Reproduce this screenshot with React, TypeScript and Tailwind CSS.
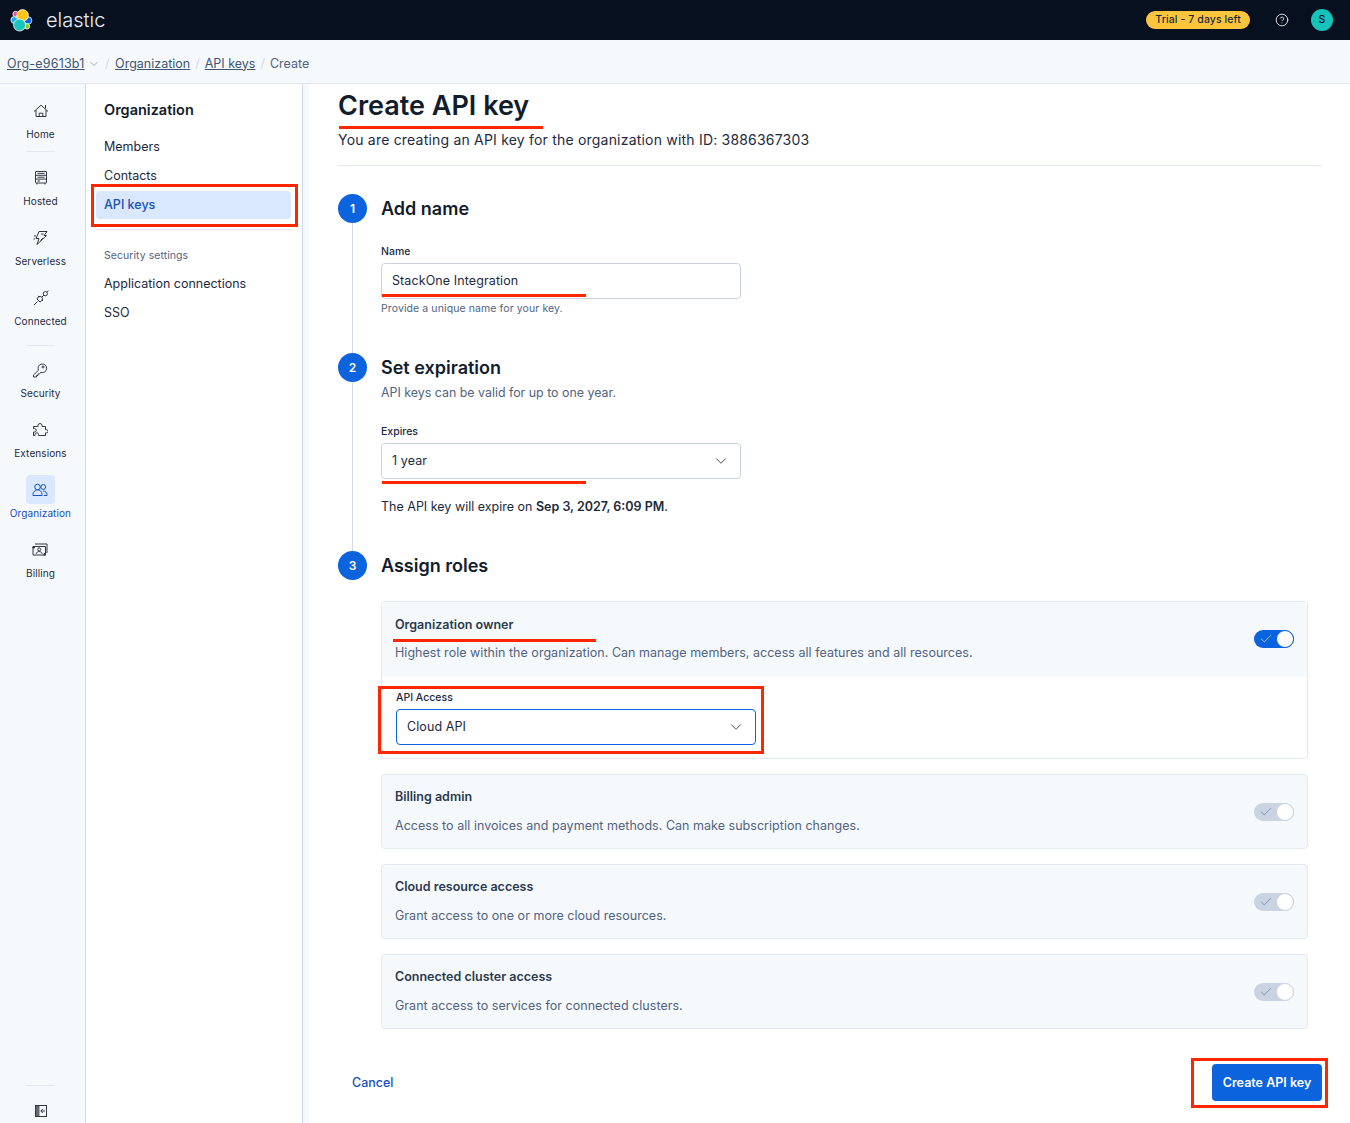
import React from "react";
import { Check, ChevronDown, CircleHelp } from "lucide-react";

type RailItem = { label: string; icon: React.ReactNode; active?: boolean };

const Glyph = ({ children }: { children: React.ReactNode }) => (
  <svg width="16" height="16" viewBox="0 0 16 16" fill="none" stroke="currentColor" strokeWidth="1" strokeLinejoin="round">
    {children}
  </svg>
);

const HomeIcon = (
  <Glyph>
    <path d="M1 8.5 8 2.2l7 6.3" />
    <path d="M3 7v6.5h10V7" />
    <path d="M6.2 13.5V10.2h3.6v3.3" />
    <path d="M12.5 2v3.5" />
  </Glyph>
);
const HostedIcon = (
  <Glyph>
    <rect x="2.5" y="1.5" width="11" height="11.5" rx="0.5" />
    <path d="M2.5 5.3h11M2.5 9.1h11M4.5 3.4h7M4.5 7.2h7M4.5 11h2.5M4 13v1.5M12 13v1.5" />
  </Glyph>
);
const BoltIcon = (
  <Glyph>
    <path d="M6 1.5h8l-3 4h2.5L4 14.5l2-6H3z" />
    <path d="M8 4h2.5M7.5 10.5l2.5-2.5M1 6h2M.5 9h1.5" />
  </Glyph>
);
const PlugIcon = (
  <Glyph>
    <path d="M1 15l3.5-3.5" />
    <path d="M4 9l3 3 1-.6.8-.9a2.4 2.4 0 0 0-3.4-3.4l-.8.8z" />
    <path d="M6.2 7.2 5 5.8M8.8 9.8l1.2 1.2M9 7l2-2" />
    <circle cx="12.3" cy="3.7" r="2.1" />
    <path d="M14 2l1.5-1.2" />
  </Glyph>
);
const KeyIcon = (
  <Glyph>
    <path d="M6.5 8.2 1.5 13v2h3v-1.5H6V12h1.5l1.3-1.7a4.3 4.3 0 1 0-2.3-2.1z" />
    <circle cx="11" cy="5" r="1" />
  </Glyph>
);
const PuzzleIcon = (
  <Glyph>
    <path d="M6 3.5a2 2 0 1 1 4 0V4.5h3.5v3.2h1a1.6 1.6 0 0 1 0 3.2h-1V13.5H6.5v-1a1.7 1.7 0 0 0-3.4 0v1H1.5V10h1a1.7 1.7 0 0 0 0-3.4h-1V4.5H6z" />
  </Glyph>
);
const UsersIcon = (
  <Glyph>
    <circle cx="5.5" cy="5" r="2.8" />
    <circle cx="11.2" cy="5" r="2.4" />
    <path d="M1 13.5v-1.2A4.5 4.5 0 0 1 10 12.3v1.2zM11 9a3.7 3.7 0 0 1 4 3.6v.9h-3.2" />
  </Glyph>
);
const BillingIcon = (
  <Glyph>
    <path d="M3 2h12v9M1 4.5h12.5V13H1z" />
    <circle cx="7.2" cy="7.4" r="1.5" />
    <path d="M4.2 11.8c.3-3 5.7-3 6 0" />
    <path d="M1 4.5h1.5V6H1zM12 11.5h1.5V13H12z" fill="currentColor" />
  </Glyph>
);
const CollapseIcon = (
  <svg width="16" height="16" viewBox="0 0 16 16" fill="none" stroke="currentColor" strokeWidth="1">
    <rect x="2.5" y="2.5" width="11" height="11" />
    <rect x="2" y="2" width="4.5" height="12" fill="currentColor" stroke="none" opacity="0.75" />
    <path d="M12 8H8m1.8-2L7.8 8l2 2" />
  </svg>
);

const ElasticLogo = () => (
  <svg width="23" height="23" viewBox="0 0 23 23" className="shrink-0" stroke="#ffffff" strokeWidth="0.8">
    <circle cx="4.3" cy="11" r="3.4" fill="#1ba9f5" />
    <circle cx="5.6" cy="5" r="2.7" fill="#f04e98" />
    <circle cx="18" cy="11.5" r="3.8" fill="#0b64dd" />
    <circle cx="17" cy="17.3" r="2.7" fill="#93c90e" />
    <circle cx="12.6" cy="6.4" r="5.8" fill="#fec514" />
    <circle cx="9.6" cy="16" r="6" fill="#16c5c0" />
  </svg>
);

const Toggle = ({ on }: { on?: boolean }) => (
  <div
    className={`flex h-[18px] w-[40px] items-center justify-between rounded-full pl-[5px] ${
      on ? "bg-[#0b64dd]" : "bg-[#cad3e2]"
    }`}
  >
    <Check size={14} strokeWidth={1} className={on ? "text-white" : "text-[#516381]"} />
    <span
      className={`h-[18px] w-[18px] rounded-full border bg-white ${
        on ? "border-[#0b64dd]" : "border-[#cad3e2]"
      }`}
    />
  </div>
);

const RailLink = ({ label, icon, active }: RailItem) => (
  <div className="flex h-12 flex-col items-center">
    <div
      className={`flex h-[29px] w-[29px] items-center justify-center rounded-[4px] ${
        active ? "bg-[#d9e8ff] text-[#1750ba]" : "text-[#343741]"
      }`}
    >
      {icon}
    </div>
    <span
      className={`mt-[1px] text-[10px] leading-[16px] tracking-[0.1px] ${
        active ? "text-[#1750ba]" : "text-[#1d2a3e]"
      }`}
    >
      {label}
    </span>
  </div>
);

const Step = ({
  n,
  title,
  line,
  className,
  children,
}: {
  n: number;
  title: string;
  line?: boolean;
  className: string;
  children: React.ReactNode;
}) => (
  <div className={`flex gap-[14px] ${className}`}>
    <div className="flex w-[29px] shrink-0 flex-col items-center">
      <div className="flex h-[29px] w-[29px] shrink-0 items-center justify-center rounded-full bg-[#0b64dd] text-[12px] font-semibold text-white">
        {n}
      </div>
      {line && <div className="w-px flex-1 bg-[#d3dae6]" />}
    </div>
    <div className="min-w-0 flex-1">
      <h2 className="text-[18px] leading-[29px] font-semibold text-[#111c2c]">{title}</h2>
      {children}
    </div>
  </div>
);

const SelectBox = ({ value, focused }: { value: string; focused?: boolean }) => (
  <div
    className={`flex h-9 w-[360px] items-center justify-between rounded-[4px] border bg-white pr-[10px] pl-[10px] text-[12.5px] tracking-[0.1px] text-[#1d2a3e] ${
      focused ? "border-[#0b64dd]" : "border-[#cad3e2]"
    }`}
  >
    {value}
    <ChevronDown size={18} strokeWidth={1.1} className="text-[#1d2a3e]" />
  </div>
);

const RoleCard = ({ title, text }: { title: string; text: string }) => (
  <div className="flex h-[75px] items-center justify-between rounded-[4px] border border-[#e3e8f2] bg-[#f6f9fc] pr-[13px] pl-[13px]">
    <div>
      <div className="text-[12.5px] leading-[18px] font-semibold text-[#2b394f]">{title}</div>
      <div className="mt-[11px] text-[12.5px] leading-[18px] tracking-[0.03px] text-[#516381]">{text}</div>
    </div>
    <Toggle />
  </div>
);

const App = () => {
  return (
    <div className="relative flex h-[1123px] w-full flex-col overflow-hidden bg-white font-['Inter',sans-serif] text-[#1d2a3e]">
      {/* Top bar */}
      <header className="flex h-10 shrink-0 items-center bg-[#07101f] pr-[17px] pl-[10px]">
        <ElasticLogo />
        <span className="ml-[13px] text-[20px] leading-none font-light text-[#e8edf4]">elastic</span>
        <div className="ml-auto flex items-center">
          <span className="rounded-full bg-[#fcc63c] px-[9px] text-[10.5px] leading-[18px] font-medium tracking-[0.1px] text-[#1d2a3e]">
            Trial - 7 days left
          </span>
          <CircleHelp size={14} strokeWidth={1.4} className="ml-[25px] text-white" />
          <span className="ml-[22px] flex h-[22px] w-[22px] items-center justify-center rounded-full bg-[#14c3b9] text-[10.5px] font-medium text-[#07101f]">
            S
          </span>
        </div>
      </header>

      {/* Breadcrumbs */}
      <nav className="flex h-11 shrink-0 items-center border-b border-[#e3e8f2] bg-[#f6f9fc] pt-[5px] pl-[7px] text-[12.5px] text-[#516381]">
        <span className="tracking-[0.2px] text-[#3f5573] underline">Org-e9613b1</span>
        <ChevronDown size={12} strokeWidth={1.1} className="ml-[3px] text-[#516381]" />
        <span className="mx-[5.5px] text-[#d3dae6]">/</span>
        <span className="text-[#3f5573] underline">Organization</span>
        <span className="mx-[5px] text-[#d3dae6]">/</span>
        <span className="text-[#3f5573] underline">API keys</span>
        <span className="mx-[5px] text-[#d3dae6]">/</span>
        <span>Create</span>
      </nav>

      <div className="flex min-h-0 flex-1">
        {/* Icon rail */}
        <aside className="flex w-[86px] shrink-0 flex-col items-center border-r border-[#d3dae6] bg-[#f6f9fc] pt-3 pr-1">
          <RailLink label="Home" icon={HomeIcon} />
          <div className="mt-[7px] mb-[11px] h-px w-[29px] bg-[#e3e8f2]" />
          <div className="flex flex-col items-center gap-3">
            <RailLink label="Hosted" icon={HostedIcon} />
            <RailLink label="Serverless" icon={BoltIcon} />
            <RailLink label="Connected" icon={PlugIcon} />
          </div>
          <div className="mt-[14px] mb-[9px] h-px w-[29px] bg-[#e3e8f2]" />
          <div className="flex flex-col items-center gap-3">
            <RailLink label="Security" icon={KeyIcon} />
            <RailLink label="Extensions" icon={PuzzleIcon} />
            <RailLink label="Organization" icon={UsersIcon} active />
            <RailLink label="Billing" icon={BillingIcon} />
          </div>
          <div className="mt-auto h-px w-[29px] bg-[#e3e8f2]" />
          <div className="mt-[17px] mb-[4px] text-[#343741]">{CollapseIcon}</div>
        </aside>

        {/* Section nav */}
        <aside className="w-[217px] shrink-0 border-r border-[#d3dae6] bg-white pt-[14px] pr-[11px] pl-[10px]">
          <h3 className="pl-2 text-[14.5px] leading-[24px] font-semibold text-[#111c2c]">Organization</h3>
          <div className="mt-[10px] pl-2 text-[12.5px] leading-[29px]">Members</div>
          <div className="pl-2 text-[12.5px] leading-[29px]">Contacts</div>
          <div className="mt-[1px] rounded-[4px] bg-[#d9e8ff] pl-2 text-[12.5px] leading-[28px] font-medium text-[#1750ba]">
            API keys
          </div>
          <div className="mt-[10px] h-px bg-[#e3e8f2]" />
          <div className="mt-[18px] pl-2 text-[10.5px] leading-[16px] tracking-[0.05px] text-[#516381]">Security settings</div>
          <div className="mt-[5px] pl-2 text-[12.5px] leading-[29px]">Application connections</div>
          <div className="pl-2 text-[12.5px] leading-[29px]">SSO</div>
        </aside>
        <div className="w-[6px] shrink-0 bg-[#f6f9fc]" />

        {/* Main */}
        <main className="min-w-0 flex-1 pt-[2px] pr-[28px] pl-[29px]">
          <h1 className="text-[27px] leading-[40px] font-semibold text-[#111c2c]">Create API key</h1>
          <p className="mt-[2px] text-[14px] leading-[24px] tracking-[0.2px]">
            You are creating an API key for the organization with ID: 3886367303
          </p>
          <div className="mt-[13px] mb-[28px] h-px bg-[#e3e8f2]" />

          <Step n={1} title="Add name" line className="h-[159px]">
            <div className="mt-[20px] text-[10.5px] leading-[18px] font-medium">Name</div>
            <div className="mt-[2px] flex h-9 w-[360px] items-center rounded-[4px] border border-[#cad3e2] pl-[10px] text-[12.5px] tracking-[0.1px]">
              StackOne Integration
            </div>
            <div className="mt-[2px] text-[10.5px] leading-[16px] tracking-[0.1px] text-[#516381]">
              Provide a unique name for your key.
            </div>
          </Step>

          <Step n={2} title="Set expiration" line className="h-[198px]">
            <div className="mt-[2px] text-[12.4px] leading-[18px] text-[#516381]">
              API keys can be valid for up to one year.
            </div>
            <div className="mt-[21px] text-[10.5px] leading-[18px] font-medium">Expires</div>
            <div className="mt-[2px]">
              <SelectBox value="1 year" />
            </div>
            <div className="mt-[19px] text-[12.5px] leading-[18px]">
              The API key will expire on <span className="font-semibold">Sep 3, 2027, 6:09 PM</span>.
            </div>
          </Step>

          <Step n={3} title="Assign roles" className="">
            <div className="mt-[21px] mr-[14px] flex flex-col gap-[15px]">
              <div className="h-[158px] overflow-hidden rounded-[4px] border border-[#e3e8f2]">
                <div className="flex h-[75px] items-center justify-between bg-[#f6f9fc] pr-[13px] pb-[2px] pl-[13px]">
                  <div>
                    <div className="text-[12.5px] leading-[18px] font-semibold text-[#2b394f]">Organization owner</div>
                    <div className="mt-[10px] text-[12.5px] leading-[18px] tracking-[0.03px] text-[#516381]">
                      Highest role within the organization. Can manage members, access all features and all resources.
                    </div>
                  </div>
                  <Toggle on />
                </div>
                <div className="px-[14px] pt-[13px]">
                  <div className="text-[10.5px] leading-[16px] font-medium">API Access</div>
                  <div className="mt-[3px]">
                    <SelectBox value="Cloud API" focused />
                  </div>
                </div>
              </div>
              <RoleCard
                title="Billing admin"
                text="Access to all invoices and payment methods. Can make subscription changes."
              />
              <RoleCard title="Cloud resource access" text="Grant access to one or more cloud resources." />
              <RoleCard title="Connected cluster access" text="Grant access to services for connected clusters." />
            </div>
          </Step>

          <div className="mt-[35px] flex items-center justify-between">
            <span className="pt-px pl-[14px] text-[12.5px] font-medium text-[#1750ba]">Cancel</span>
            <button className="h-[37px] w-[110px] rounded-[4px] bg-[#0b64dd] pt-px text-[12.5px] font-semibold text-white">
              Create API key
            </button>
          </div>
        </main>
      </div>

      {/* Red review marks drawn over the page */}
      <div className="absolute top-[126px] left-[339px] h-[3px] w-[204px] bg-[#ff2600]" />
      <div className="absolute top-[294px] left-[382px] h-[3px] w-[204px] bg-[#ff2600]" />
      <div className="absolute top-[481px] left-[382px] h-[3px] w-[204px] bg-[#ff2600]" />
      <div className="absolute top-[639px] left-[393px] h-[3px] w-[203px] bg-[#ff2600]" />
      <div className="absolute top-[184px] left-[91px] h-[43px] w-[207px] border-[3px] border-[#ff2600]" />
      <div className="absolute top-[686px] left-[378px] h-[68px] w-[386px] border-[3px] border-[#ff2600]" />
      <div className="absolute top-[1058px] left-[1191px] h-[50px] w-[137px] border-[3px] border-[#ff2600]" />
    </div>
  );
};

export default App;
